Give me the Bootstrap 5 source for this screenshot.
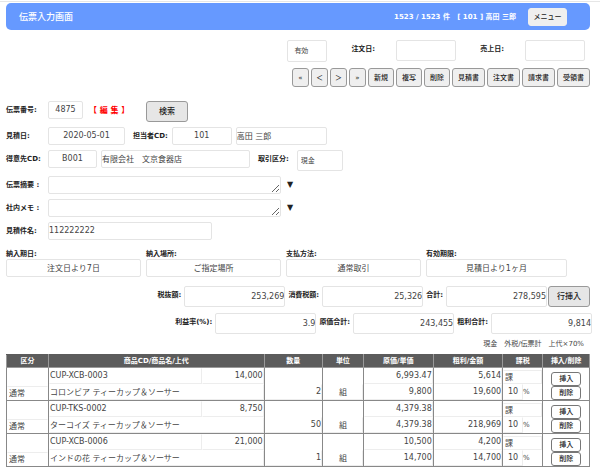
<!DOCTYPE html>
<html lang="ja">
<head>
<meta charset="utf-8">
<meta name="viewport" content="width=device-width, initial-scale=1">
<title>伝票入力画面</title>
<link href="https://cdn.jsdelivr.net/npm/bootstrap@5.3.0/dist/css/bootstrap.min.css" rel="stylesheet">
<style>
body{font-family:"DejaVu Sans","Noto Sans CJK JP",sans-serif;font-size:8px;line-height:12px;color:#222;background:#fff;border-top:1px solid #fff}
.page{border-top:1px solid #e6e6e6;padding:1px 10px 0 6px}
.topbar{background:#6699ff;color:#fff;border-radius:5px;height:27px;padding:0 23px 0 13px}
.topbar h1{font-size:9px;line-height:14px}
.status{font-size:7px;font-weight:700;white-space:pre}
.cap{font-size:7px;font-weight:700;line-height:10px;white-space:nowrap}
.cap-row{width:42px;flex:none}
.form-control,.form-select{font-size:8px;line-height:12px;color:#444;border:1px solid #e4e4e4;border-radius:2px;padding:0;height:18px;min-height:0;background:#fff;flex:none}
.form-control{padding-bottom:2px}
.form-select{font-size:7px;padding:0 0 0 6px;height:22px}
.form-select.w-deal{padding-left:3px}
.tall{height:21px}
.btn{font-size:7px;line-height:10px;font-weight:500;color:#222;background:#efefef;border:1px solid #999;border-radius:3px;padding:0;height:19px;white-space:nowrap}
.btn-menu{height:18px;width:39px;border-color:#efefef}
.btn-big{font-size:8px;height:21px;width:42px;background:#e6e6e6}
.w-nav{width:17px}.w-two{width:26px}.w-three{width:33px}
.w-code{width:35px}.w-cust{width:49px}.w-date{width:77px}.w-sel{width:40px}.w-day{width:60px}
.w-name{width:91px}.w-firm{width:149px}.w-memo{width:233px}.w-title{width:164px}.w-deal{width:46px}.w-sum{width:101px}
.dates{margin-top:10px;padding-right:5px}
.dates .form-select,.dates .form-control:not(:last-child){margin-right:24px}
.dates .cap{margin-right:21px}
.tools{margin-top:6px;gap:2px}
.lines{display:flex;flex-direction:column;gap:5px;margin-top:14px}
textarea.form-control{resize:both;overflow:hidden;min-height:0}
.edit{color:#f00;font-size:8px;font-weight:700;width:59px;padding-left:6px}
.mark-down{font-size:8px;line-height:10px;padding:4px 0 0 2px}
.terms{display:grid;grid-template-columns:repeat(3,135fr) 141fr;gap:5px;padding-right:23px;margin-top:9px}
.sums{gap:3px;margin-top:9px}
.sums .btn{margin-left:-2px}
.sums-low{margin-top:6px;margin-right:-2px}
.sums .form-control{padding-bottom:0}
.note{font-size:7px;line-height:10px;color:#444;white-space:pre}
.note-line{margin:5px 6px 5px 0}
.slip{width:100%;table-layout:fixed;border-collapse:collapse}
.slip th{background:#5c5c5c;color:#fff;font-size:7px;line-height:10px;height:13px;padding:0;text-align:center;border:1px solid #999;border-top-color:#5c5c5c;white-space:nowrap}
.slip td{height:33px;padding:0;border:1px solid #888;vertical-align:top}
.cell{height:32px;display:flex;flex-direction:column}
.cell .form-control,.cell .form-select{height:16px;border-color:#fff #ededed #ededed #fff;border-radius:0;min-width:0}
.cell .form-select.kind,.cell .form-select.tax{font-size:8px;line-height:12px;padding:1px 0 0 1px;border-color:#ededed #fff #fff #fff}
.cell .form-select.kind{height:14px}
.cell .form-select.tax{border-color:#ededed;border-left-color:#fff;height:14px;margin-top:2px}
.cell .price{width:62px}
.cell .rate{width:20px}
.cell .btn{height:14px;width:30px;background:#fff;border-color:#777}
</style>
<script src="https://cdn.jsdelivr.net/npm/bootstrap@5.3.0/dist/js/bootstrap.bundle.min.js"></script>
</head>
<body>
<div class="page">
<header class="topbar d-flex align-items-center">
<h1 class="mb-0 me-auto">伝票入力画面</h1>
<span class="status me-2">1523 / 1523 件   [ 101 ] 高田 三郎</span>
<button type="button" class="btn btn-menu ms-1">メニュー</button>
</header>

<form>
<div class="dates d-flex justify-content-end align-items-start">
<select class="form-select w-sel" aria-label="状態"><option>有効</option></select>
<label class="cap pt-1" for="orderDate">注文日:</label>
<input id="orderDate" class="form-control tall w-day">
<label class="cap pt-1" for="saleDate">売上日:</label>
<input id="saleDate" class="form-control tall w-day">
</div>
<div class="tools d-flex justify-content-end">
<button type="button" class="btn w-nav">«</button>
<button type="button" class="btn w-nav">＜</button>
<button type="button" class="btn w-nav">＞</button>
<button type="button" class="btn w-nav">»</button>
<button type="button" class="btn w-two">新規</button>
<button type="button" class="btn w-two">複写</button>
<button type="button" class="btn w-two">削除</button>
<button type="button" class="btn w-three">見積書</button>
<button type="button" class="btn w-three">注文書</button>
<button type="button" class="btn w-three">請求書</button>
<button type="button" class="btn w-three">受領書</button>
</div>

<div class="lines">
<div class="d-flex align-items-start">
<label class="cap cap-row pt-1" for="slipNo">伝票番号:</label>
<input id="slipNo" class="form-control w-code text-center" value="4875">
<span class="edit pt-1 text-nowrap">【 編 集 】</span>
<button type="button" class="btn btn-big ms-1">検索</button>
</div>
<div class="d-flex align-items-start">
<label class="cap cap-row pt-1" for="quoteDate">見積日:</label>
<input id="quoteDate" class="form-control w-date text-center me-2" value="2020-05-01">
<label class="cap pt-1 me-1" for="staffCd">担当者CD:</label>
<input id="staffCd" class="form-control w-day text-center me-1" value="101">
<input class="form-control w-name" aria-label="担当者名" value="高田 三郎">
</div>
<div class="d-flex align-items-start">
<label class="cap cap-row pt-1" for="custCd">得意先CD:</label>
<input id="custCd" class="form-control w-cust text-center me-1" value="B001">
<input class="form-control w-firm me-2" aria-label="得意先名" value="有限会社　文京食器店">
<label class="cap pt-1 me-2" for="deal">取引区分:</label>
<select id="deal" class="form-select tall w-deal"><option>現金</option></select>
</div>
<div class="d-flex align-items-start">
<label class="cap cap-row pt-1" for="summary">伝票摘要 :</label>
<textarea id="summary" class="form-control w-memo me-1" rows="1"></textarea>
<span class="mark-down">▼</span>
</div>
<div class="d-flex align-items-start">
<label class="cap cap-row pt-1" for="memo">社内メモ :</label>
<textarea id="memo" class="form-control w-memo me-1" rows="1"></textarea>
<span class="mark-down">▼</span>
</div>
<div class="d-flex align-items-start">
<label class="cap cap-row pt-1" for="subject">見積件名:</label>
<input id="subject" class="form-control w-title" value="112222222">
</div>
</div>

<div class="terms">
<div><label class="cap d-block" for="due">納入期日:</label><input id="due" class="form-control text-center" value="注文日より7日"></div>
<div><label class="cap d-block" for="place">納入場所:</label><input id="place" class="form-control text-center" value="ご指定場所"></div>
<div><label class="cap d-block" for="pay">支払方法:</label><input id="pay" class="form-control text-center" value="通常取引"></div>
<div><label class="cap d-block" for="valid">有効期限:</label><input id="valid" class="form-control text-center" value="見積日より1ヶ月"></div>
</div>

<div class="sums d-flex justify-content-end align-items-start">
<label class="cap pt-1" for="net">税抜額:</label>
<input id="net" class="form-control tall w-sum text-end" value="253,269">
<label class="cap pt-1" for="vat">消費税額:</label>
<input id="vat" class="form-control tall w-sum text-end" value="25,326">
<label class="cap pt-1" for="total">合計:</label>
<input id="total" class="form-control tall w-sum text-end" value="278,595">
<button type="button" class="btn btn-big">行挿入</button>
</div>
<div class="sums sums-low d-flex justify-content-end align-items-start">
<label class="cap pt-1" for="margin">利益率(%):</label>
<input id="margin" class="form-control tall w-sum text-end" value="3.9">
<label class="cap pt-1" for="cost">原価合計:</label>
<input id="cost" class="form-control tall w-sum text-end" value="243,455">
<label class="cap pt-1" for="gross">粗利合計:</label>
<input id="gross" class="form-control tall w-sum text-end" value="9,814">
</div>
<div class="note note-line text-end">現金　外税/伝票計　上代×70%</div>

<table class="slip">
<colgroup><col style="width:7.2%"><col style="width:37%"><col style="width:10%"><col style="width:7%"><col style="width:12%"><col style="width:11.9%"><col style="width:6.9%"><col style="width:8%"></colgroup>
<thead><tr><th>区分</th><th>商品CD/商品名/上代</th><th>数量</th><th>単位</th><th>原価/単価</th><th>粗利/金額</th><th>課税</th><th>挿入/削除</th></tr></thead>
<tbody>
<tr>
<td><div class="cell justify-content-end"><select class="form-select kind" aria-label="区分"><option>通常</option></select></div></td>
<td><div class="cell"><div class="d-flex"><input class="form-control flex-fill" aria-label="商品CD" value="CUP-XCB-0003"><input class="form-control price text-end" aria-label="上代" value="14,000"></div><input class="form-control" aria-label="商品名" value="コロンビア ティーカップ＆ソーサー"></div></td>
<td><div class="cell justify-content-end"><input class="form-control text-end" aria-label="数量" value="2"></div></td>
<td><div class="cell justify-content-end"><input class="form-control text-center" aria-label="単位" value="組"></div></td>
<td><div class="cell"><input class="form-control text-end" aria-label="原価" value="6,993.47"><input class="form-control text-end" aria-label="単価" value="9,800"></div></td>
<td><div class="cell"><input class="form-control text-end" aria-label="粗利" value="5,614"><input class="form-control text-end" aria-label="金額" value="19,600"></div></td>
<td><div class="cell"><select class="form-select tax" aria-label="課税"><option>課</option></select><div class="d-flex align-items-center"><input class="form-control rate text-center" aria-label="税率" value="10"><span class="note">%</span></div></div></td>
<td><div class="cell align-items-center justify-content-end"><button type="button" class="btn">挿入</button><button type="button" class="btn">削除</button></div></td>
</tr>
<tr>
<td><div class="cell justify-content-end"><select class="form-select kind" aria-label="区分"><option>通常</option></select></div></td>
<td><div class="cell"><div class="d-flex"><input class="form-control flex-fill" aria-label="商品CD" value="CUP-TKS-0002"><input class="form-control price text-end" aria-label="上代" value="8,750"></div><input class="form-control" aria-label="商品名" value="ターコイズ ティーカップ＆ソーサー"></div></td>
<td><div class="cell justify-content-end"><input class="form-control text-end" aria-label="数量" value="50"></div></td>
<td><div class="cell justify-content-end"><input class="form-control text-center" aria-label="単位" value="組"></div></td>
<td><div class="cell"><input class="form-control text-end" aria-label="原価" value="4,379.38"><input class="form-control text-end" aria-label="単価" value="4,379.38"></div></td>
<td><div class="cell"><input class="form-control text-end" aria-label="粗利" value=""><input class="form-control text-end" aria-label="金額" value="218,969"></div></td>
<td><div class="cell"><select class="form-select tax" aria-label="課税"><option>課</option></select><div class="d-flex align-items-center"><input class="form-control rate text-center" aria-label="税率" value="10"><span class="note">%</span></div></div></td>
<td><div class="cell align-items-center justify-content-end"><button type="button" class="btn">挿入</button><button type="button" class="btn">削除</button></div></td>
</tr>
<tr>
<td><div class="cell justify-content-end"><select class="form-select kind" aria-label="区分"><option>通常</option></select></div></td>
<td><div class="cell"><div class="d-flex"><input class="form-control flex-fill" aria-label="商品CD" value="CUP-XCB-0006"><input class="form-control price text-end" aria-label="上代" value="21,000"></div><input class="form-control" aria-label="商品名" value="インドの花 ティーカップ＆ソーサー"></div></td>
<td><div class="cell justify-content-end"><input class="form-control text-end" aria-label="数量" value="1"></div></td>
<td><div class="cell justify-content-end"><input class="form-control text-center" aria-label="単位" value="組"></div></td>
<td><div class="cell"><input class="form-control text-end" aria-label="原価" value="10,500"><input class="form-control text-end" aria-label="単価" value="14,700"></div></td>
<td><div class="cell"><input class="form-control text-end" aria-label="粗利" value="4,200"><input class="form-control text-end" aria-label="金額" value="14,700"></div></td>
<td><div class="cell"><select class="form-select tax" aria-label="課税"><option>課</option></select><div class="d-flex align-items-center"><input class="form-control rate text-center" aria-label="税率" value="10"><span class="note">%</span></div></div></td>
<td><div class="cell align-items-center justify-content-end"><button type="button" class="btn">挿入</button><button type="button" class="btn">削除</button></div></td>
</tr>
</tbody>
</table>
</form>
</div>
</body>
</html>
